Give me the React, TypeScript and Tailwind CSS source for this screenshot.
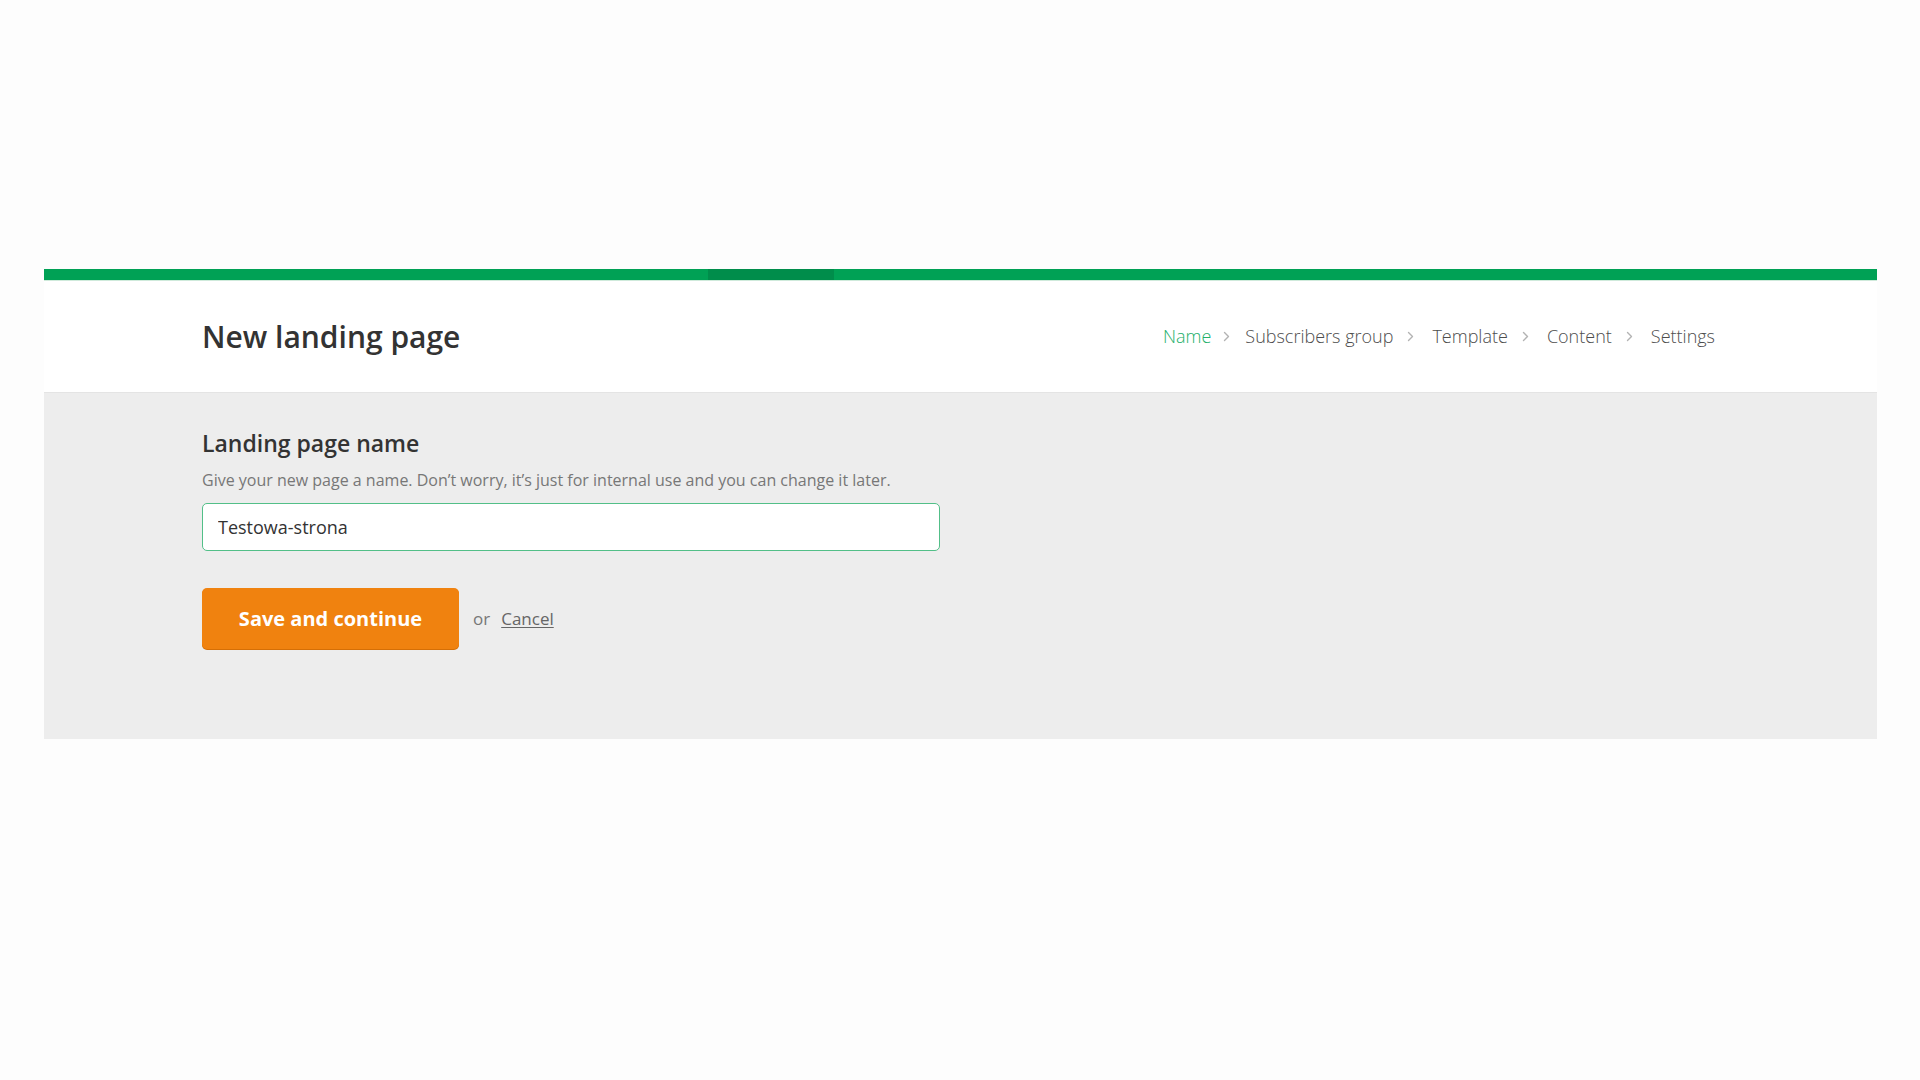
const steps = ["Name", "Subscribers group", "Template", "Content", "Settings"];

function Chevron({ first }: { first?: boolean }) {
  return (
    <svg
      width="7"
      height="11"
      viewBox="0 0 7 11"
      className={first ? "ml-[12px] mr-[15px] shrink-0" : "ml-[14px] mr-[18px] shrink-0"}
      aria-hidden
    >
      <path d="M1.5 1.5 L5.5 5.5 L1.5 9.5" fill="none" stroke="#b3b3b3" strokeWidth="1.4" strokeLinecap="round" strokeLinejoin="round" />
    </svg>
  );
}

export default function App() {
  return (
    <div className="min-h-screen bg-[#fdfdfd] pl-[44px] pr-[43px] pt-[269px] font-['Open_Sans',sans-serif]">
      {/* progress bar */}
      <div className="flex h-[12px] border-b border-[#cfeadb] bg-[#00a155]">
        <div className="w-[664px]" />
        <div className="w-[126px] bg-[#008d4b]" />
        <div className="flex-1" />
      </div>

      {/* header */}
      <div className="flex h-[111px] items-center justify-between bg-white pl-[158px] pr-[162px]">
        <h1 className="text-[30px] font-semibold text-[#333]">New landing page</h1>
        <nav className="flex items-center text-[18px] font-light text-[#4d4d4d]">
          {steps.map((step, i) => (
            <div key={step} className="flex items-center">
              {i > 0 && <Chevron first={i === 1} />}
              <span className={i === 0 ? "text-[#22b06a]" : ""}>{step}</span>
            </div>
          ))}
        </nav>
      </div>

      {/* form panel */}
      <div className="border-t border-[#e4e4e4] bg-[#ededed] px-[158px] pb-[90px] pt-[36px]">
        <h2 className="text-[23px] font-semibold leading-[28px] text-[#333]">Landing page name</h2>
        <p className="mt-[12px] text-[16px] leading-[22px] text-[#777]">
          Give your new page a name. Don’t worry, it’s just for internal use and you can change it later.
        </p>
        <input
          type="text"
          defaultValue="Testowa-strona"
          className="mt-[12px] block h-[48px] w-[738px] rounded-[5px] border border-[#52bf88] bg-white px-[15px] text-[18px] text-[#333] outline-none"
        />
        <div className="mt-[37px] flex items-center">
          <button
            type="button"
            className="h-[61px] w-[257px] rounded-[5px] bg-[#f0820f] text-[20px] font-bold text-white shadow-[0_1px_0_#d56f06]"
          >
            Save and continue
          </button>
          <span className="ml-[14px] text-[17px] text-[#777]">or</span>
          <a href="#" className="ml-[11px] text-[17px] text-[#666] underline underline-offset-2">
            Cancel
          </a>
        </div>
      </div>
    </div>
  );
}
